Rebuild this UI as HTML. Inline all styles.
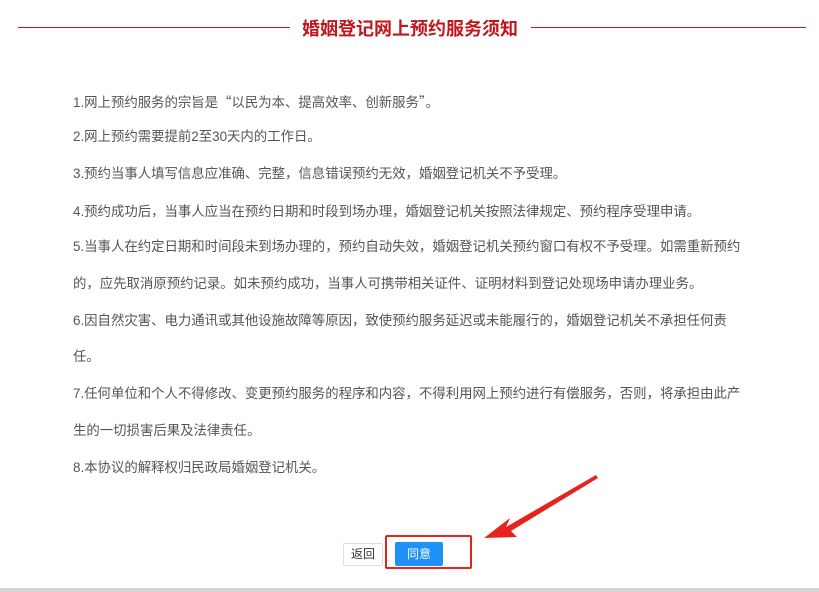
<!DOCTYPE html>
<html><head><meta charset="utf-8"><style>
body{margin:0;width:819px;height:592px;background:#fff;position:relative;overflow:hidden;font-family:"Liberation Sans","Noto Sans CJK SC",sans-serif}
.l{position:absolute;height:1px;background:#c0161c;top:27px}
.t{position:absolute;top:15px;left:302px;font-size:18px;font-weight:bold;color:#c0161c;white-space:nowrap;letter-spacing:0}
.p{position:absolute;left:73px;font-size:13.4px;color:#555;white-space:nowrap;line-height:16px}
.q{font-family:"Noto Sans CJK SC",sans-serif}
.b1{position:absolute;left:343px;top:543px;width:40px;height:23px;border:1px solid #ddd;box-sizing:border-box;font-size:12px;color:#333;text-align:center;line-height:21px;border-radius:2px}
.b2{position:absolute;left:395px;top:542px;width:48px;height:24px;background:#1e90f8;color:#fff;font-size:12px;text-align:center;line-height:24px;border-radius:2px}
.box{position:absolute;left:385px;top:535px;width:87px;height:34px;border:2px solid #e5231f;box-sizing:border-box;border-radius:2px}
.bot{position:absolute;left:0;top:588px;width:819px;height:4px;background:#d4d4d4}
</style></head><body>
<div class="l" style="left:18px;width:272px"></div>
<div class="t">婚姻登记网上预约服务须知</div>
<div class="l" style="left:531px;width:275px"></div>
<div class="p" style="top:93px">1.网上预约服务的宗旨是<span class="q">“</span>以民为本、提高效率、创新服务<span class="q">”</span>。</div>
<div class="p" style="top:129px">2.网上预约需要提前2至30天内的工作日。</div>
<div class="p" style="top:166px">3.预约当事人填写信息应准确、完整，信息错误预约无效，婚姻登记机关不予受理。</div>
<div class="p" style="top:204px">4.预约成功后，当事人应当在预约日期和时段到场办理，婚姻登记机关按照法律规定、预约程序受理申请。</div>
<div class="p" style="top:239px">5.当事人在约定日期和时间段未到场办理的，预约自动失效，婚姻登记机关预约窗口有权不予受理。如需重新预约</div>
<div class="p" style="top:276px">的，应先取消原预约记录。如未预约成功，当事人可携带相关证件、证明材料到登记处现场申请办理业务。</div>
<div class="p" style="top:313px">6.因自然灾害、电力通讯或其他设施故障等原因，致使预约服务延迟或未能履行的，婚姻登记机关不承担任何责</div>
<div class="p" style="top:349px">任。</div>
<div class="p" style="top:386px">7.任何单位和个人不得修改、变更预约服务的程序和内容，不得利用网上预约进行有偿服务，否则，将承担由此产</div>
<div class="p" style="top:423px">生的一切损害后果及法律责任。</div>
<div class="p" style="top:460px">8.本协议的解释权归民政局婚姻登记机关。</div>
<div class="b1">返回</div>
<div class="b2">同意</div>
<div class="box"></div>
<svg style="position:absolute;left:0;top:0" width="819" height="592"><polygon points="596,475 506,527 510,518 484,538 517,537 511,531 598,478" fill="#e5231f"/></svg>
<div class="bot"></div>
</body></html>
